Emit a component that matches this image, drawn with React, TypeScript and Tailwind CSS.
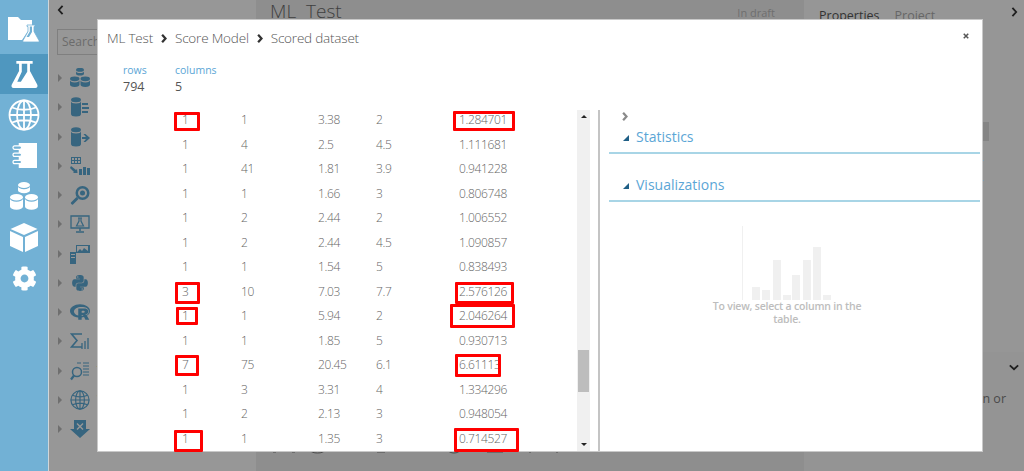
import type { ReactNode } from "react";
import { FaCog, FaPython, FaRProject } from "react-icons/fa";

const rows = [
  ["1", "1", "3.38", "2", "1.284701"],
  ["1", "4", "2.5", "4.5", "1.111681"],
  ["1", "41", "1.81", "3.9", "0.941228"],
  ["1", "1", "1.66", "3", "0.806748"],
  ["1", "2", "2.44", "2", "1.006552"],
  ["1", "2", "2.44", "4.5", "1.090857"],
  ["1", "1", "1.54", "5", "0.838493"],
  ["3", "10", "7.03", "7.7", "2.576126"],
  ["1", "1", "5.94", "2", "2.046264"],
  ["1", "1", "1.85", "5", "0.930713"],
  ["7", "75", "20.45", "6.1", "6.61113"],
  ["1", "3", "3.31", "4", "1.334296"],
  ["1", "2", "2.13", "3", "0.948054"],
  ["1", "1", "1.35", "3", "0.714527"],
];

function Can({ x, y, w, h }: { x: number; y: number; w: number; h: number }) {
  const ry = w / 4;
  return (
    <g>
      <path d={`M${x} ${y}v${h}a${w / 2} ${ry} 0 0 0 ${w} 0v${-h}a${w / 2} ${ry} 0 0 1 ${-w} 0z`} />
      <ellipse cx={x + w / 2} cy={y - 1.2} rx={w / 2} ry={ry} />
    </g>
  );
}

function Flask({ className }: { className?: string }) {
  return (
    <svg viewBox="0 0 32 32" className={className} fill="currentColor">
      <path d="M7 1h18v3h-3v8l8 15c1 2 0 4-2 4H4c-2 0-3-2-2-4l8-15V4H7z" />
      <path d="M13 4h6v9l-7 11H8l5-11z" fill="#4f97bf" />
    </svg>
  );
}

function FolderFlask() {
  return (
    <svg viewBox="0 0 32 26" className="w-[32px] h-[26px]" fill="white">
      <path d="M0 1h10l3 3h11v7h-4v4l-6 9H0z" />
      <path d="M19 9h8v1.500h-1v5l5 9c.4 1 0 1.500-1 1.500H16c-1 0-1.400-.5-1-1.500l5-9v-5h-1z" stroke="#72b1d5" strokeWidth=".8" />
      <path d="M21.800 10.500h2.200v5.500l-3 5h-2.500l3.300-5.500z" fill="#72b1d5" />
    </svg>
  );
}

function Globe({ className, sw = 1.7 }: { className?: string; sw?: number }) {
  return (
    <svg viewBox="0 0 32 32" className={className} fill="none" stroke="currentColor" strokeWidth={sw}>
      <circle cx="16" cy="16" r="14.500" />
      <ellipse cx="16" cy="16" rx="7" ry="14.500" />
      <path d="M16 1.500v29M1.500 16h29M4 8.500c7 3 17 3 24 0M4 23.500c7-3 17-3 24 0" />
    </svg>
  );
}

function Notebook() {
  return (
    <svg viewBox="0 0 26 26" className="w-[25px] h-[25px]" fill="white">
      <path d="M7 0h19v26H7z" />
      <g fill="#72b1d5" stroke="white" strokeWidth="1.300">
        <rect x="1" y="3" width="9" height="3.500" rx="1.700" />
        <rect x="1" y="10.500" width="9" height="3.500" rx="1.700" />
        <rect x="1" y="18" width="9" height="3.500" rx="1.700" />
      </g>
    </svg>
  );
}

function Cans() {
  return (
    <svg viewBox="0 0 28 28" className="w-[28px] h-[28px]" fill="white">
      <Can x={8} y={4.200} w={12} h={4} />
      <Can x={0} y={16.500} w={13} h={8} />
      <Can x={15} y={16.500} w={13} h={8} />
    </svg>
  );
}

function Cube() {
  return (
    <svg viewBox="0 0 28 29" className="w-[28px] h-[29px]" fill="white">
      <path d="M14 0l13.500 6L14 12 .5 6z" />
      <path d="M0 8l13 6v15L0 23zM28 8l-13 6v15l13-6z" />
    </svg>
  );
}

function PaletteIcon({ index }: { index: number }) {
  const cls = "w-[20px] h-[20px]";
  switch (index) {
    case 0:
      return (
        <svg viewBox="0 0 20 20" className={cls} fill="currentColor">
          <Can x={6} y={3} w={8} h={2.500} />
          <Can x={0} y={12} w={9.500} h={4.500} />
          <Can x={10.500} y={12} w={9.500} h={4.500} />
        </svg>
      );
    case 1:
      return (
        <svg viewBox="0 0 20 20" className={cls} fill="currentColor">
          <Can x={1} y={4} w={10} h={13} />
          <path d="M12 6h6v2h-6zM12 10h7v2h-7zM12 14h6v2h-6z" />
        </svg>
      );
    case 2:
      return (
        <svg viewBox="0 0 20 20" className={cls} fill="currentColor">
          <Can x={1} y={4} w={10} h={13} />
          <path d="M12 10h4l-2.500-3h2l4.500 4-4.500 4h-2l2.500-3h-4z" />
        </svg>
      );
    case 3:
      return (
        <svg viewBox="0 0 20 20" className={cls} fill="currentColor">
          <path d="M1 1h10v7H1zM2 2v2h2V2zm3 0v2h2V2zm3 0v2h2V2zM2 5v2h2V5zm3 0v2h2V5zm3 0v2h2V5z" fillRule="evenodd" />
          <path d="M1 10l5 4 1-1 .5 4H3l1-1-4-4z" />
          <path d="M9 13h3v6H9zM13 11h3v8h-3zM17 12h3v7h-3z" />
        </svg>
      );
    case 4:
      return (
        <svg viewBox="0 0 20 20" className={cls} fill="currentColor">
          <path d="M12.500 1a7 7 0 1 0 0 14 7 7 0 0 0 0-14zm0 2.500a4.500 4.500 0 1 1 0 9 4.500 4.500 0 0 1 0-9z" fillRule="evenodd" />
          <circle cx="12.500" cy="8" r="2.500" />
          <path d="M6.500 12l2 2-5.500 5.500c-1 .8-2.700-1-2-2z" />
        </svg>
      );
    case 5:
      return (
        <svg viewBox="0 0 20 20" className={cls} fill="none" stroke="currentColor">
          <path d="M1 2h18v12H1z" strokeWidth="1.300" />
          <path d="M8 4h4M9 4v3l-2.500 5h7L11 7V4" strokeWidth="1.200" />
          <path d="M10 14v3M6 18h8" strokeWidth="1.500" />
        </svg>
      );
    case 6:
      return (
        <svg viewBox="0 0 20 20" className={cls} fill="currentColor">
          <path d="M6 1h14v8H6zm1 1v6l3-3 2 2 2-3 4 3V2z" fillRule="evenodd" />
          <path d="M0 8h6v12H0zM1 10v1h4v-1zm0 3v1h4v-1z" fillRule="evenodd" />
        </svg>
      );
    case 7:
      return <FaPython className="w-[18px] h-[18px] mx-[1px]" />;
    case 8:
      return <FaRProject className="w-[20px] h-[18px]" />;
    case 9:
      return (
        <svg viewBox="0 0 20 20" className={cls} fill="none" stroke="currentColor">
          <path d="M12 3H1.500L7 9.500 1.500 16H12" strokeWidth="1.600" />
          <path d="M12 12v6M15 10v8M18 7v11" strokeWidth="1.300" />
        </svg>
      );
    case 10:
      return (
        <svg viewBox="0 0 20 20" className={cls} fill="none" stroke="currentColor">
          <circle cx="7" cy="11" r="4.500" strokeWidth="1.500" />
          <path d="M4 14.500L1 18.500" strokeWidth="2.200" />
          <path d="M7 2h4M13 2h6M13 5h6M13 8h6M13 11h6M13 14h6" strokeWidth="1.200" />
        </svg>
      );
    case 11:
      return <Globe className="w-[20px] h-[20px]" sw={1.900} />;
    default:
      return (
        <svg viewBox="0 0 20 20" className={cls} fill="currentColor">
          <path d="M4 1h12v9h4l-10 9L0 10h4zM7.500 4L6.500 5l2.500 2.500L6.500 10l1 1L10 8.500l2.500 2.500 1-1L11 7.500 13.500 5l-1-1L10 6.500z" fillRule="evenodd" />
        </svg>
      );
  }
}

const modules = [
  "Saved Datasets",
  "Data Format Conversions",
  "Data Input and Output",
  "Data Transformation",
  "Feature Selection",
  "Machine Learning",
  "OpenCV Library Modules",
  "Python Language Modules",
  "R Language Modules",
  "Statistical Functions",
  "Text Analytics",
  "Web Service",
  "Deprecated",
];

function SectionHead({ children }: { children: ReactNode }) {
  return (
    <div className="h-[31px] flex items-center gap-[7px] pl-[14px] pb-[3px] border-b-2 border-[#a8d5e6] text-[14px] text-[#5ba6d6]">
      <span className="w-0 h-0 mt-[3px] border-l-[6px] border-l-transparent border-b-[6px] border-b-[#1f5f86]" />
      {children}
    </div>
  );
}

export default function App() {
  return (
    <div className="relative w-[1024px] h-[471px] overflow-hidden flex bg-[#979797] font-['Open_Sans',sans-serif]">
      {/* left rail */}
      <div className="w-[49px] shrink-0 bg-[#72b1d5] border-r border-[#cfd6da] text-white flex flex-col">
        <div className="h-[54px] flex items-center justify-center pt-[4px]"><FolderFlask /></div>
        <div className="h-[40px] bg-[#4f97bf] flex items-center justify-center"><Flask className="w-[29px] h-[29px]" /></div>
        <div className="h-[41px] flex items-center justify-center"><Globe className="w-[32px] h-[32px]" sw={1.800} /></div>
        <div className="h-[40px] flex items-center justify-center"><Notebook /></div>
        <div className="h-[42px] flex items-center justify-center"><Cans /></div>
        <div className="h-[41px] flex items-center justify-center"><Cube /></div>
        <div className="h-[40px] flex items-center justify-center"><FaCog className="w-[25px] h-[25px]" /></div>
      </div>

      {/* module palette */}
      <div className="w-[207px] shrink-0 bg-[#979797]">
        <div className="h-[29px] pl-[8px] pt-[3px]">
          <svg viewBox="0 0 8 12" className="w-[7px] h-[10px] mt-[2px]" fill="none" stroke="#1f1f1f" strokeWidth="2.200">
            <path d="M6.500 1L2 6l4.500 5" />
          </svg>
        </div>
        <div className="ml-[8px] mr-[8px] h-[26px] border border-[#7f7f7f] pl-[4px] text-[12px] leading-[24px] text-[#6b6b6b] whitespace-nowrap overflow-hidden">
          Search experiment items
        </div>
        <div className="mt-[8.500px]">
          {modules.map((m, i) => (
            <div key={m} className="h-[29.250px] flex items-center pl-[9px] text-[#37657f]">
              <span className="w-0 h-0 border-y-[4.500px] border-y-transparent border-l-[4px] border-l-[#6f6f6f] mr-[8px]" />
              <span className="w-[20px] mr-[7px] flex justify-center"><PaletteIcon index={i} /></span>
              <span className="text-[13px] text-[#7c5a32] whitespace-nowrap">{m}</span>
            </div>
          ))}
        </div>
      </div>

      {/* experiment canvas */}
      <div className="flex-1 bg-[#8e8e8e] flex flex-col justify-between">
        <div className="flex justify-between pl-[14px] pr-[29px]">
          <div className="text-[19px] leading-[24px] font-light text-[#3f3f3f] -mt-[1px]">ML&nbsp; Test</div>
          <div className="text-[11px] mt-[5px] text-[#6f6f6f]">In draft</div>
        </div>
        <svg viewBox="0 0 300 8" className="w-[300px] h-[8px] ml-[14px] mb-[13px]" fill="none" stroke="#4a4a4a" strokeWidth="1">
          <path d="M3 0v2h3M22 2h3V0M40 0c1 4 14 4 15 0M107 2h8M178 0c1 4 11 4 12 0M217 2h16M260 0v3M287 0v3" />
        </svg>
      </div>

      {/* properties panel */}
      <div className="w-[220px] shrink-0 flex flex-col bg-[#969696]">
        <div className="h-[352px] pl-[15px] relative">
          <div className="flex gap-[15px] text-[12.500px] leading-[18px] pt-[7px]">
            <span className="text-[#333]">Properties</span>
            <span className="text-[#666]">Project</span>
          </div>
          <svg viewBox="0 0 8 12" className="absolute right-[6px] top-[7px] w-[7px] h-[10px]" fill="none" stroke="#1f1f1f" strokeWidth="2.200">
            <path d="M1.500 1L6 6l-4.500 5" />
          </svg>
          <div className="absolute left-[178px] top-[122px] w-[7px] h-[19px] bg-[#858585]" />
          <div className="absolute left-[172px] top-[160px] w-[8px] h-px bg-[#7a9cb0]" />
          <div className="absolute left-[172px] top-[180px] w-[8px] h-px bg-[#7a9cb0]" />
        </div>
        <div className="flex-1 bg-[#949494] relative pr-[18px] text-right text-[12.500px] text-[#4a4a4a]">
          <svg viewBox="0 0 12 8" className="absolute right-[5px] top-[12px] w-[10px] h-[7px]" fill="none" stroke="#1f1f1f" strokeWidth="2.200">
            <path d="M1 1.500L6 6l5-4.500" />
          </svg>
          <div className="pt-[38px] whitespace-nowrap">a module on or</div>
        </div>
      </div>

      {/* dataset dialog */}
      <div className="absolute left-[98px] top-[20px] w-[884px] h-[431px] bg-white flex flex-col shadow-[0_0_0_1px_#c9c9c9] text-[#7f7f7f]">
        <div className="h-[37px] flex items-center pl-[9px] pr-[13px] text-[13.500px] tracking-[-0.2px] font-light text-[#555]">
          <span>ML Test</span>
          <svg viewBox="0 0 8 12" className="w-[6px] h-[9px] mx-[8px]" fill="none" stroke="#333" strokeWidth="3">
            <path d="M1.500 1L6 6l-4.500 5" />
          </svg>
          <span>Score Model</span>
          <svg viewBox="0 0 8 12" className="w-[6px] h-[9px] mx-[8px]" fill="none" stroke="#333" strokeWidth="3">
            <path d="M1.500 1L6 6l-4.500 5" />
          </svg>
          <span>Scored dataset</span>
          <svg viewBox="0 0 8 8" className="w-[6px] h-[6px] ml-auto -mt-[5px]" fill="none" stroke="#555" strokeWidth="2">
            <path d="M1 1l6 6M7 1L1 7" />
          </svg>
        </div>
        <div className="h-[51px] flex pl-[25px] pt-[5px]">
          <div className="w-[52px]">
            <div className="text-[10.500px] leading-[16px] text-[#5ba6d6]">rows</div>
            <div className="text-[12.500px] leading-[18px] text-[#555]">794</div>
          </div>
          <div>
            <div className="text-[10.500px] leading-[16px] text-[#5ba6d6]">columns</div>
            <div className="text-[12.500px] leading-[18px] text-[#555]">5</div>
          </div>
        </div>
        <div className="flex-1 flex min-h-0">
          <div className="w-[477px] overflow-hidden pl-[84px] text-[12px] tracking-[-0.35px] font-light text-[#666]">
            {rows.map((r, i) => (
              <div key={i} className="h-[24.500px] flex items-center">
                <div className="w-[59px]">{r[0]}</div>
                <div className="w-[77px]">{r[1]}</div>
                <div className="w-[58px]">{r[2]}</div>
                <div className="w-[83px]">{r[3]}</div>
                <div>{r[4]}</div>
              </div>
            ))}
          </div>
          <div className="ml-[2px] mt-[2px] w-[13px] bg-[#f0f0f0] flex flex-col items-center justify-between py-[5px] relative">
            <span className="w-0 h-0 border-x-[3px] border-x-transparent border-b-[3px] border-b-[#222]" />
            <span className="w-0 h-0 border-x-[3px] border-x-transparent border-t-[3px] border-t-[#222]" />
            <div className="absolute left-[1px] right-[1px] top-[240px] h-[42px] bg-[#bdbdbd]" />
          </div>
          <div className="ml-[8px] mt-[2px] w-[2px] bg-[#c4c4c4]" />
          <div className="flex-1 pl-[9px] pr-[2px] mt-[2px]">
            <div className="h-[13px] pl-[13px] pt-[2px]">
              <svg viewBox="0 0 8 12" className="w-[6px] h-[9px]" fill="none" stroke="#8a8a8a" strokeWidth="3">
                <path d="M1.500 1L6 6l-4.500 5" />
              </svg>
            </div>
            <SectionHead>Statistics</SectionHead>
            <div className="h-[17px]" />
            <SectionHead>Visualizations</SectionHead>
            <svg viewBox="0 0 90 75" className="w-[90px] h-[75px] ml-[133px] mt-[24px]" fill="#f0f0f0">
              <rect x="0" y="0" width="1" height="74" />
              <rect x="10" y="61" width="8" height="13" />
              <rect x="20" y="64" width="8" height="10" />
              <rect x="31" y="34" width="8" height="40" />
              <rect x="41" y="69" width="8" height="5" />
              <rect x="50" y="49" width="8" height="25" />
              <rect x="61" y="34" width="8" height="40" />
              <rect x="71" y="21" width="8" height="53" />
              <rect x="81" y="69" width="8" height="5" />
            </svg>
            <div className="w-[150px] ml-[103px] -mt-[1px] text-center text-[10.500px] tracking-[-0.2px] leading-[13px] font-semibold text-[#bdbdbd]">
              To view, select a column in the table.
            </div>
          </div>
        </div>

        {/* red highlight boxes drawn over the table */}
        <div className="absolute left-[76px] top-[92px] w-[26px] h-[19px] border-[3px] border-[#f00] rounded-[1px]" />
        <div className="absolute left-[355px] top-[91px] w-[62px] h-[20px] border-[3px] border-[#f00] rounded-[1px]" />
        <div className="absolute left-[77px] top-[262px] w-[25px] h-[22px] border-[3px] border-[#f00] rounded-[1px]" />
        <div className="absolute left-[357px] top-[262px] w-[59px] h-[22px] border-[3px] border-[#f00] rounded-[1px]" />
        <div className="absolute left-[78px] top-[287px] w-[22px] h-[18px] border-[3px] border-[#f00] rounded-[1px]" />
        <div className="absolute left-[352px] top-[284px] w-[65px] h-[24px] border-[3px] border-[#f00] rounded-[1px]" />
        <div className="absolute left-[77px] top-[335px] w-[24px] h-[21px] border-[3px] border-[#f00] rounded-[1px]" />
        <div className="absolute left-[357px] top-[334px] w-[46px] h-[23px] border-[3px] border-[#f00] rounded-[1px]" />
        <div className="absolute left-[76px] top-[410px] w-[29px] h-[22px] border-[3px] border-[#f00] rounded-[1px]" />
        <div className="absolute left-[356px] top-[408px] w-[65px] h-[24px] border-[3px] border-[#f00] rounded-[1px]" />
      </div>
    </div>
  );
}
